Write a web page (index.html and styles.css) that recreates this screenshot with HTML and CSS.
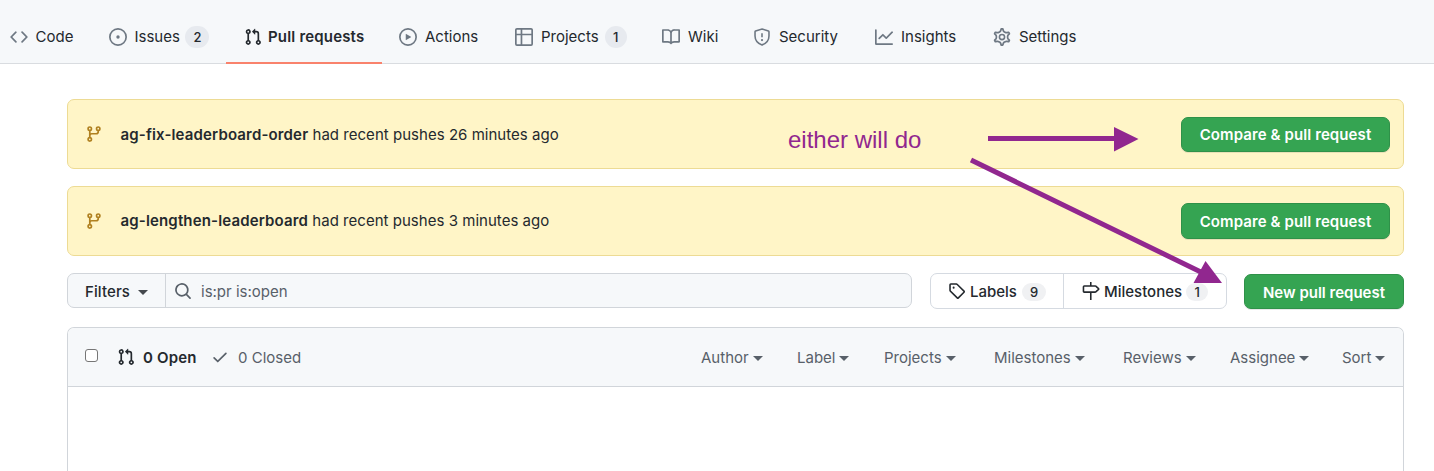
FILE: index.html
```html
<!DOCTYPE html>
<html lang="en">
<head>
<meta charset="utf-8">
<title>Pull requests</title>
<link rel="stylesheet" href="styles.css">
</head>
<body>
<svg class="defs" aria-hidden="true">
  <symbol id="pr" viewBox="0 0 16 16"><path d="M7.177 3.073L9.573.677A.25.25 0 0110 .854v4.792a.25.25 0 01-.427.177L7.177 3.427a.25.25 0 010-.354zM3.75 2.5a.75.75 0 100 1.5.75.75 0 000-1.5zm-2.25.75a2.25 2.25 0 113 2.122v5.256a2.251 2.251 0 11-1.5 0V5.372A2.25 2.25 0 011.5 3.25zM11 2.5h-1V4h1a1 1 0 011 1v5.628a2.251 2.251 0 101.5 0V5A2.5 2.5 0 0011 2.5zm1 10.25a.75.75 0 111.5 0 .75.75 0 01-1.5 0zM3.75 12a.75.75 0 100 1.5.75.75 0 000-1.500z" fill-rule="evenodd"/></symbol>
  <symbol id="branch" viewBox="0 0 16 16"><g fill="none" stroke="currentColor" stroke-width="1.5"><circle cx="4.250" cy="3.250" r="1.500"/><circle cx="11.750" cy="3.250" r="1.500"/><circle cx="4.250" cy="12.750" r="1.500"/><path d="M4.250 4.750v6.500M11.750 4.750V6q0 1.750-1.750 1.750H6Q4.250 7.750 4.250 9.500"/></g></symbol>
</svg>

<nav class="tabs">
  <a class="tab tab-code"><svg class="icon" viewBox="0 0 16 16"><path d="M4.72 3.22a.75.75 0 011.06 1.06L2.06 8l3.72 3.72a.75.75 0 11-1.06 1.06L.47 8.53a.75.75 0 010-1.06l4.25-4.25zm6.56 0a.75.75 0 10-1.06 1.06L13.94 8l-3.72 3.72a.75.75 0 101.06 1.06l4.25-4.25a.75.75 0 000-1.06l-4.25-4.25z"/></svg><span>Code</span></a>
  <a class="tab tab-issues"><svg class="icon" viewBox="0 0 16 16"><path d="M8 9.5a1.5 1.5 0 100-3 1.5 1.5 0 000 3z"/><path fill-rule="evenodd" d="M8 0a8 8 0 100 16A8 8 0 008 0zM1.5 8a6.5 6.5 0 1113 0 6.5 6.5 0 01-13 0z"/></svg><span>Issues</span><b class="counter">2</b></a>
  <a class="tab tab-pulls selected"><svg class="icon"><use href="#pr"/></svg><span>Pull requests</span></a>
  <a class="tab tab-actions"><svg class="icon" viewBox="0 0 16 16"><path fill-rule="evenodd" d="M1.5 8a6.5 6.5 0 1113 0 6.5 6.5 0 01-13 0zM8 0a8 8 0 100 16A8 8 0 008 0zM6.379 5.227A.25.25 0 006 5.442v5.117a.25.25 0 00.379.214l4.264-2.559a.25.25 0 000-.428L6.379 5.227z"/></svg><span>Actions</span></a>
  <a class="tab tab-projects"><svg class="icon" viewBox="0 0 16 16"><path fill-rule="evenodd" d="M0 1.75C0 .784.784 0 1.75 0h12.5C15.216 0 16 .784 16 1.75v12.5A1.75 1.75 0 0114.25 16H1.75A1.75 1.75 0 010 14.25V1.75zM1.5 6.5v7.75c0 .138.112.25.25.25H5v-8H1.5zM5 5H1.5V1.75a.25.25 0 01.25-.25H5V5zm1.5 1.5v8h7.75a.25.25 0 00.25-.25V6.5h-8zm8-1.5h-8V1.5h7.75a.25.25 0 01.25.25V5z"/></svg><span>Projects</span><b class="counter">1</b></a>
  <a class="tab tab-wiki"><svg class="icon" viewBox="0 0 16 16"><path fill-rule="evenodd" d="M0 1.75A.75.75 0 01.75 1h4.253c1.227 0 2.317.59 3 1.501A3.744 3.744 0 0111.006 1h4.245a.75.75 0 01.75.75v10.5a.75.75 0 01-.75.75h-4.507a2.25 2.25 0 00-1.591.659l-.622.621a.75.75 0 01-1.06 0l-.622-.621A2.25 2.25 0 005.258 13H.75a.75.75 0 01-.75-.75V1.75zm8.755 3a2.25 2.25 0 012.25-2.25H14.5v9h-3.757c-.71 0-1.4.201-1.992.572l.004-7.322zm-1.504 7.324l.004-5.073-.002-2.253A2.25 2.25 0 005.003 2.5H1.5v9h3.757a3.75 3.75 0 011.994.574z"/></svg><span>Wiki</span></a>
  <a class="tab tab-security"><svg class="icon line" viewBox="0 0 16 16"><path d="M8 .9l5.7 1.8q.5.2.5.7V7c0 4-2.5 6.6-6.2 8.1C4.300 13.600 1.800 11 1.800 7V3.400q0-.5.5-.7zM8 4.700v3.600"/><circle class="dot" cx="8" cy="10.700" r="1"/></svg><span>Security</span></a>
  <a class="tab tab-insights"><svg class="icon" viewBox="0 0 16 16"><path d="M1.500 1.750a.75.75 0 00-1.500 0v12.500c0 .414.336.75.75.75h14.500a.75.75 0 000-1.500H1.500V1.750zm14.280 2.530a.75.75 0 00-1.060-1.060L10 7.940 7.530 5.470a.75.75 0 00-1.060 0L3.220 8.720a.75.75 0 001.060 1.060L7 7.060l2.470 2.470a.75.75 0 001.060 0l5.250-5.250z"/></svg><span>Insights</span></a>
  <a class="tab tab-settings"><svg class="icon line" viewBox="0 0 16 16"><path transform="translate(-.88 -.88) scale(1.11)" d="M7.429 1.525a6.593 6.593 0 011.142 0c.036.003.108.036.137.146l.289 1.105c.147.56.55.967.997 1.189.174.086.341.183.501.29.417.278.97.423 1.53.27l1.102-.303c.11-.03.175.016.195.046.219.31.41.641.573.989.014.031.022.11-.059.19l-.815.806c-.411.406-.562.957-.53 1.456a4.588 4.588 0 010 .582c-.032.499.119 1.05.53 1.456l.815.806c.08.08.073.159.059.19a6.494 6.494 0 01-.573.99c-.02.029-.086.074-.195.045l-1.103-.303c-.559-.153-1.112-.008-1.529.27-.16.107-.327.204-.5.29-.449.222-.851.628-.998 1.189l-.289 1.105c-.029.11-.101.143-.137.146a6.613 6.613 0 01-1.142 0c-.036-.003-.108-.037-.137-.146l-.289-1.105c-.147-.56-.55-.967-.997-1.189a4.502 4.502 0 01-.501-.29c-.417-.278-.97-.423-1.53-.27l-1.102.303c-.11.03-.175-.016-.195-.046a6.492 6.492 0 01-.573-.989c-.014-.031-.022-.11.059-.19l.815-.806c.411-.406.562-.957.53-1.456a4.587 4.587 0 010-.582c.032-.499-.119-1.05-.53-1.456l-.815-.806c-.08-.08-.073-.159-.059-.19a6.44 6.44 0 01.573-.99c.02-.029.086-.075.195-.045l1.103.303c.559.153 1.112.008 1.529-.27.16-.107.327-.204.5-.29.449-.222.851-.628.998-1.189l.289-1.105c.029-.11.101-.143.137-.146z"/><circle cx="8" cy="8" r="2.300"/></svg><span>Settings</span></a>
</nav>

<main class="content">
  <section class="flash">
    <svg class="icon flash-icon"><use href="#branch"/></svg>
    <p class="flash-text flash-text-low"><strong>ag-fix-leaderboard-order</strong> <span>had recent pushes 26 minutes ago</span></p>
    <button class="btn-green compare">Compare &amp; pull request</button>
  </section>
  <section class="flash">
    <svg class="icon flash-icon"><use href="#branch"/></svg>
    <p class="flash-text"><strong>ag-lengthen-leaderboard</strong> <span>had recent pushes 3 minutes ago</span></p>
    <button class="btn-green compare compare-low">Compare &amp; pull request</button>
  </section>

  <div class="subnav">
    <div class="search">
      <button class="filters"><span>Filters</span><i class="caret"></i></button>
      <div class="query"><svg class="icon" viewBox="0 0 16 16"><path fill-rule="evenodd" d="M11.500 7a4.499 4.499 0 11-8.998 0A4.499 4.499 0 0111.500 7zm-.82 4.740a6 6 0 111.060-1.060l3.040 3.040a.75.75 0 11-1.060 1.060l-3.040-3.040z"/></svg><span>is:pr is:open</span></div>
    </div>
    <div class="links">
      <a class="link link-labels"><svg class="icon line" viewBox="0 0 16 16"><path d="M1.800 2.500q0-.7.7-.7h5l.6.25 6.100 6.100q.5.500 0 1l-5 5q-.5.500-1 0l-6.150-6.100-.25-.6z"/><circle class="dot" cx="5" cy="5" r=".9"/></svg><span>Labels</span><b class="counter">9</b></a>
      <a class="link link-milestones"><svg class="icon line" viewBox="0 0 16 16"><path d="M7.800 0v3.500M7.800 9V16M2 3.500h9.700q.3 0 .6.200l2.400 2.200q.4.350 0 .7l-2.400 2.200q-.3.200-.6.200H2q-.7 0-.7-.7V4.200q0-.7.7-.7z"/></svg><span>Milestones</span><b class="counter">1</b></a>
    </div>
    <button class="btn-green new-pr">New pull request</button>
  </div>

  <section class="list">
    <header class="list-head">
      <span class="check"></span>
      <svg class="icon"><use href="#pr"/></svg><strong class="open">0 Open</strong>
      <svg class="icon tick" viewBox="0 0 16 16"><path d="M13.780 4.220a.75.75 0 010 1.060l-7.250 7.250a.75.75 0 01-1.060 0L2.220 9.280a.75.75 0 011.060-1.060L6 10.940l6.720-6.720a.75.75 0 011.060 0z"/></svg><span class="closed">0 Closed</span>
      <div class="menus">
        <span class="menu m-author"><span>Author</span><i class="caret"></i></span>
        <span class="menu m-label"><span>Label</span><i class="caret"></i></span>
        <span class="menu m-projects"><span>Projects</span><i class="caret"></i></span>
        <span class="menu m-milestones"><span>Milestones</span><i class="caret"></i></span>
        <span class="menu m-reviews"><span>Reviews</span><i class="caret"></i></span>
        <span class="menu m-assignee"><span>Assignee</span><i class="caret"></i></span>
        <span class="menu m-sort"><span>Sort</span><i class="caret"></i></span>
      </div>
    </header>
  </section>
</main>

<div class="note">either will do</div>
<svg class="arrows" viewBox="0 0 1434 471">
  <path class="shaft" d="M988 138.500H1116M971 160L1207 275"/>
  <path d="M1114 127l24.500 12-24.500 12.500zM1205.500 261l16.500 22h-28.500z"/>
</svg>
</body>
</html>
```
FILE: styles.css
```css
* { box-sizing: border-box; }
html, body { height: 100%; }
body {
  margin: 0;
  position: relative;
  overflow: hidden;
  display: flex;
  flex-direction: column;
  background: #fff;
  color: #24292e;
  font: 15px/22px Inter, "Liberation Sans", sans-serif;
  white-space: nowrap;
}
button { font: inherit; color: inherit; margin: 0; padding: 0; white-space: nowrap; }
.defs { position: absolute; width: 0; height: 0; }
.icon { width: 18px; height: 18px; flex: none; fill: currentColor; }
.line { fill: none; stroke: currentColor; stroke-width: 1.4; overflow: visible; }
.line .dot { fill: currentColor; stroke: none; }

.tabs {
  display: flex;
  flex: none;
  height: 64px;
  padding: 10px 0 0 10px;
  background: #f6f8fa;
  border-bottom: 1px solid #d9dce0;
}
.tab { display: flex; align-items: center; gap: 8px; flex: none; height: 54px; }
.tab > .icon { color: #6e7883; }
.counter {
  display: inline-block;
  min-width: 22px;
  height: 22px;
  padding: 0 8px;
  border-radius: 11px;
  background: #e7eaef;
  font-size: 13px;
  font-weight: 500;
  line-height: 22px;
  text-align: center;
}
.tab .counter { margin-left: -2px; }
.tab-code { width: 99px; gap: 7.5px; }
.tab-issues { width: 117px; gap: 7.5px; }
.tab-pulls { width: 156px; padding-left: 18px; gap: 6px; font-weight: 600; letter-spacing: .18px; border-bottom: 2px solid #f9826c; padding-top: 2px; }
.tab-pulls > .icon { color: #24292e; }
.tab-actions { width: 116px; margin-left: 17px; }
.tab-projects { width: 147px; }
.tab-wiki { width: 91px; }
.tab-security { width: 122px; }
.tab-insights { width: 118px; }

.content { display: flex; flex-direction: column; flex: 1; padding: 35px 30px 0 67px; }
.flash {
  display: flex;
  align-items: center;
  flex: none;
  height: 70px;
  margin-bottom: 17px;
  padding: 0 13px 0 17px;
  background: #fff5c7;
  border: 1px solid #eddb94;
  border-radius: 7px;
}
.flash-icon { color: #b08020; }
.flash-text { flex: 1; margin: 0 0 0 17.5px; letter-spacing: .03px; }
.flash-text-low { padding-top: 2px; }
.flash-text strong { font-weight: 600; letter-spacing: .15px; }
.btn-green {
  height: 35px;
  padding-top: 2px;
  border: 1px solid #2f9149;
  border-radius: 7px;
  background: #35a452;
  box-shadow: 0 1px 0 rgba(27, 31, 35, .1);
  color: #fff;
  font-weight: 600;
}
.compare { width: 209px; letter-spacing: .1px; }
.compare-low { height: 36px; }

.subnav { display: flex; flex: none; height: 36px; }
.search {
  display: flex;
  width: 845px;
  height: 35px;
  border: 1px solid #d1d5da;
  border-radius: 7px;
  background: #f6f8fa;
}
.filters {
  display: flex;
  align-items: center;
  gap: 8px;
  width: 98px;
  padding-left: 17px;
  border: 0;
  border-right: 1px solid #d1d5da;
  background: none;
  font-weight: 500;
  letter-spacing: .1px;
}
.filters span, .query span { padding-top: 2px; }
.caret { flex: none; margin-top: 2px; border: 5px solid transparent; border-top-color: currentColor; border-bottom: 0; }
.filters .caret { margin-top: 3px; opacity: .85; }
.query { display: flex; align-items: center; gap: 9px; padding-left: 8px; color: #586069; }
.links {
  display: flex;
  width: 297px;
  height: 36px;
  margin-left: 18px;
  border: 1px solid #d5dae1;
  border-radius: 7px;
  font-weight: 500;
}
.link { display: flex; align-items: center; gap: 4px; padding-left: 17px; }
.link span { padding-top: 1px; }
.link .counter { height: 18px; margin: 1px 0 0 1px; line-height: 18px; background: #f0f1f3; }
.link-labels { width: 133px; border-right: 1px solid #d5dae1; }
.link-milestones { padding-left: 18px; }
.link-milestones .counter { margin-left: 0; }
.new-pr { width: 160px; margin: 1px 0 0 17px; }

.list {
  flex: 1;
  margin-top: 18px;
  border: 1px solid #d1d5da;
  border-bottom: 0;
  border-radius: 7px 7px 0 0;
}
.list-head {
  display: flex;
  align-items: center;
  height: 59px;
  padding-left: 17px;
  background: #f6f8fa;
  border-bottom: 1px solid #d1d5da;
  border-radius: 6px 6px 0 0;
  color: #586069;
}
.check { width: 13px; height: 13px; margin: -4px 19px 0 0; border: 1px solid #767676; border-radius: 3px; background: #fff; }
.list-head > .icon:not(.tick) { color: #24292e; }
.open { width: 76px; padding: 2px 0 0 8px; color: #24292e; font-weight: 600; letter-spacing: .15px; }
.closed { padding: 2px 0 0 9px; }
.menus { display: flex; margin-left: auto; padding-top: 2px; }
.menu { display: flex; align-items: center; gap: 4px; }
.menu .caret { margin-top: 0; }
.m-author { width: 96px; }
.m-label { width: 87px; }
.m-projects { width: 110px; }
.m-milestones { width: 129px; }
.m-reviews { width: 107px; }
.m-assignee { width: 112px; }
.m-sort { width: 61px; }

.note {
  position: absolute;
  left: 788px;
  top: 126px;
  color: #91278f;
  font: 24px/28px "Liberation Sans", Arial, sans-serif;
}
.arrows { position: absolute; left: 0; top: 0; width: 1434px; height: 471px; fill: #91278f; pointer-events: none; }
.shaft { stroke: #91278f; stroke-width: 5; fill: none; }
```
